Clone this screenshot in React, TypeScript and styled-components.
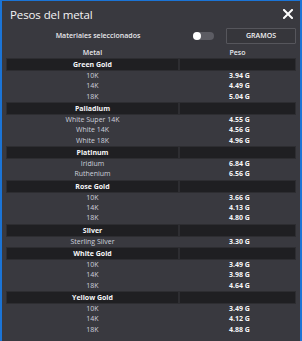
import React, { useState } from "react";
import styled, { createGlobalStyle } from "styled-components";

const GlobalStyle = createGlobalStyle`
  html, body { margin: 0; padding: 0; background: #38383e; }
  body { font-family: "Open Sans", "Noto Sans", sans-serif; }
  * { box-sizing: border-box; }
`;

const Window = styled.div`
  width: 302px;
  height: 341px;
  background: #39393f;
  border-left: 2px solid #1b74d6;
  border-right: 2px solid #1b74d6;
  border-top: 1px solid #1b74d6;
  overflow: hidden;
  display: flex;
  flex-direction: column;
  color: #f2f2f4;
`;

const TitleBar = styled.div`
  height: 26px;
  display: flex;
  align-items: center;
  justify-content: space-between;
  padding: 0 5px 0 8px;
`;

const Title = styled.div`
  font-size: 11.5px;
  font-weight: 500;
  color: #f4f4f6;
  letter-spacing: -0.1px;
`;

const CloseButton = styled.button`
  width: 14px;
  height: 14px;
  padding: 0;
  border: 0;
  background: transparent;
  display: flex;
  align-items: center;
  justify-content: center;
  cursor: pointer;
`;

const Controls = styled.div`
  height: 17px;
  display: grid;
  grid-template-columns: 184px 36px 70px;
  align-items: center;
  padding-left: 4px;
`;

const ControlLabel = styled.div`
  text-align: center;
  font-size: 7px;
  font-weight: 600;
  color: #e8e8ec;
`;

const Toggle = styled.div<{ $on: boolean }>`
  width: 21px;
  height: 8px;
  border-radius: 4px;
  background: ${(p) => (p.$on ? "#1b74d6" : "#5c5c63")};
  position: relative;
  margin-left: 3px;
  cursor: pointer;
`;

const Knob = styled.span<{ $on: boolean }>`
  position: absolute;
  top: 0;
  left: ${(p) => (p.$on ? "13px" : "0")};
  width: 8px;
  height: 8px;
  border-radius: 50%;
  background: #ffffff;
`;

const UnitButton = styled.button`
  width: 70px;
  height: 16px;
  border: 1px solid #56565c;
  border-radius: 1px;
  background: #36363b;
  color: #f2f2f4;
  font-family: "Open Sans", "Noto Sans", sans-serif;
  font-size: 7px;
  font-weight: 600;
  padding: 0;
`;

const Table = styled.div`
  margin: 4px 4px 0 4px;
  display: grid;
  grid-template-columns: 173px 117px;
  column-gap: 0;
`;

const HeadCell = styled.div`
  height: 10px;
  line-height: 9px;
  text-align: center;
  font-size: 7px;
  font-weight: 600;
  color: #e8e8ee;
`;

const GroupCell = styled.div`
  height: 13px;
  line-height: 11px;
  background: #1f1f22;
  border: 1px solid #2d2d31;
  text-align: center;
  font-size: 7px;
  font-weight: 700;
  color: #f6f6f8;
`;

const DataCell = styled.div<{ $value?: boolean }>`
  height: 10.33px;
  line-height: 10.33px;
  text-align: center;
  font-size: 7px;
  font-weight: ${(p) => (p.$value ? 700 : 500)};
  color: ${(p) => (p.$value ? "#f6f6f8" : "#cdd0dc")};
  padding-left: ${(p) => (p.$value ? "4px" : "0")};
`;

type Group = { name: string; items: [string, string][] };

const groups: Group[] = [
  { name: "Green Gold", items: [["10K", "3.94 G"], ["14K", "4.49 G"], ["18K", "5.04 G"]] },
  {
    name: "Palladium",
    items: [["White Super 14K", "4.55 G"], ["White 14K", "4.56 G"], ["White 18K", "4.96 G"]],
  },
  { name: "Platinum", items: [["Iridium", "6.84 G"], ["Ruthenium", "6.56 G"]] },
  { name: "Rose Gold", items: [["10K", "3.66 G"], ["14K", "4.13 G"], ["18K", "4.80 G"]] },
  { name: "Silver", items: [["Sterling Silver", "3.30 G"]] },
  { name: "White Gold", items: [["10K", "3.49 G"], ["14K", "3.98 G"], ["18K", "4.64 G"]] },
  { name: "Yellow Gold", items: [["10K", "3.49 G"], ["14K", "4.12 G"], ["18K", "4.88 G"]] },
];

export default function App() {
  const [on, setOn] = useState(false);
  return (
    <>
      <GlobalStyle />
      <Window>
        <TitleBar>
          <Title>Pesos del metal</Title>
          <CloseButton aria-label="Cerrar">
            <svg width="10" height="10" viewBox="0 0 10 10">
              <path d="M1 1 L9 9 M9 1 L1 9" stroke="#ffffff" strokeWidth="2" strokeLinecap="square" />
            </svg>
          </CloseButton>
        </TitleBar>
        <Controls>
          <ControlLabel>Materiales seleccionados</ControlLabel>
          <Toggle $on={on} onClick={() => setOn(!on)}>
            <Knob $on={on} />
          </Toggle>
          <UnitButton>GRAMOS</UnitButton>
        </Controls>
        <Table>
          <HeadCell>Metal</HeadCell>
          <HeadCell>Peso</HeadCell>
          {groups.map((g) => (
            <React.Fragment key={g.name}>
              <GroupCell>{g.name}</GroupCell>
              <GroupCell />
              {g.items.map(([n, v], i) => (
                <React.Fragment key={g.name + i}>
                  <DataCell>{n}</DataCell>
                  <DataCell $value>{v}</DataCell>
                </React.Fragment>
              ))}
            </React.Fragment>
          ))}
        </Table>
      </Window>
    </>
  );
}
